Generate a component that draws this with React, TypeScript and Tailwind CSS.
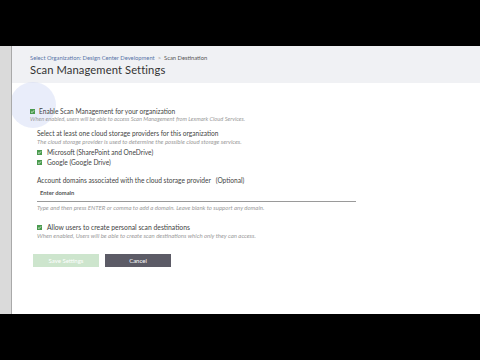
import React from "react";

function Check({ className = "" }: { className?: string }) {
  return (
    <span className={`inline-flex h-[5px] w-[5px] items-center justify-center bg-[#4a9a4e] ${className}`}>
      <svg viewBox="0 0 10 10" className="h-[5px] w-[5px]">
        <path d="M2 5.2 L4.2 7.3 L8 2.8" fill="none" stroke="#e8f5e9" strokeWidth="1.6" />
      </svg>
    </span>
  );
}

export default function App() {
  const font = { fontFamily: "Lato, 'Open Sans', sans-serif" };
  return (
    <div className="flex h-[360px] w-[480px] flex-col bg-black" style={font}>
      <div className="h-[46px] shrink-0" />
      <div className="flex h-[268px] shrink-0">
        {/* left rail */}
        <div className="w-[12px] shrink-0 border-r border-[#a9a9a9] bg-[#dadada]" />
        <div className="relative flex flex-1 flex-col overflow-hidden bg-white">
          {/* header */}
          <div className="h-[37px] shrink-0 bg-[#f0f1f4] pl-[18px]">
            <div className="mt-[8px] flex items-center gap-[3px] text-[5.8px] leading-[7px]">
              <span className="text-[#5874a8]">Select Organization: Design Center Development</span>
              <span className="text-[#999]">&gt;</span>
              <span className="text-[#555]">Scan Destination</span>
            </div>
            <div className="mt-[1px] text-[11.2px] leading-[15px] tracking-[0.1px] text-[#333]">
              Scan Management Settings
            </div>
          </div>

          {/* click highlight */}
          <div className="pointer-events-none absolute left-[-2px] top-[36px] h-[46px] w-[46px] rounded-full bg-[#c9d3f2] opacity-40" />

          {/* body */}
          <div className="relative pl-[18px] text-[#444]">
            <div className="mt-[24px] flex items-center gap-[4px] text-[6.6px] leading-[8px]">
              <Check />
              <span>Enable Scan Management for your organization</span>
            </div>
            <div className="text-[5.7px] italic leading-[8px] text-[#9a9a9a]">
              When enabled, users will be able to access Scan Management from Lexmark Cloud Services.
            </div>

            <div className="pl-[7px]">
              <div className="mt-[6px] text-[6.6px] leading-[9px]">
                Select at least one cloud storage providers for this organization
              </div>
              <div className="text-[6px] italic leading-[8px] text-[#9a9a9a]">
                The cloud storage provider is used to determine the possible cloud storage services.
              </div>
              <div className="mt-[2px] flex items-center gap-[5px] text-[6.6px] leading-[8px]">
                <Check />
                <span>Microsoft (SharePoint and OneDrive)</span>
              </div>
              <div className="mt-[2px] flex items-center gap-[5px] text-[6.6px] leading-[8px]">
                <Check />
                <span>Google (Google Drive)</span>
              </div>

              <div className="mt-[10px] text-[6.6px] leading-[8px]">
                Account domains associated with the cloud storage provider&nbsp;&nbsp;&nbsp;(Optional)
              </div>
              <div className="mt-[5px] w-[319px] border-b border-[#9a9a9a] pb-[4px] pl-[3px] text-[5.8px] font-bold leading-[8px] text-[#555]">
                Enter domain
              </div>
              <div className="mt-[2px] text-[6px] italic leading-[8px] text-[#9a9a9a]">
                Type and then press ENTER or comma to add a domain. Leave blank to support any domain.
              </div>

              <div className="mt-[11px] flex items-center gap-[5px] text-[6.8px] leading-[8px]">
                <Check />
                <span>Allow users to create personal scan destinations</span>
              </div>
              <div className="mt-[1px] text-[6px] italic leading-[8px] text-[#9a9a9a]">
                When enabled, Users will be able to create scan destinations which only they can access.
              </div>
            </div>

            <div className="mt-[14px] flex gap-[6px] pl-[3px]">
              <div className="flex h-[13px] w-[66px] items-center justify-center bg-[#cde5cd] text-[6px] text-white">
                Save Settings
              </div>
              <div className="flex h-[13px] w-[66px] items-center justify-center bg-[#5c5b66] text-[6px] text-white">
                Cancel
              </div>
            </div>
          </div>
        </div>
      </div>
      <div className="flex-1" />
    </div>
  );
}
